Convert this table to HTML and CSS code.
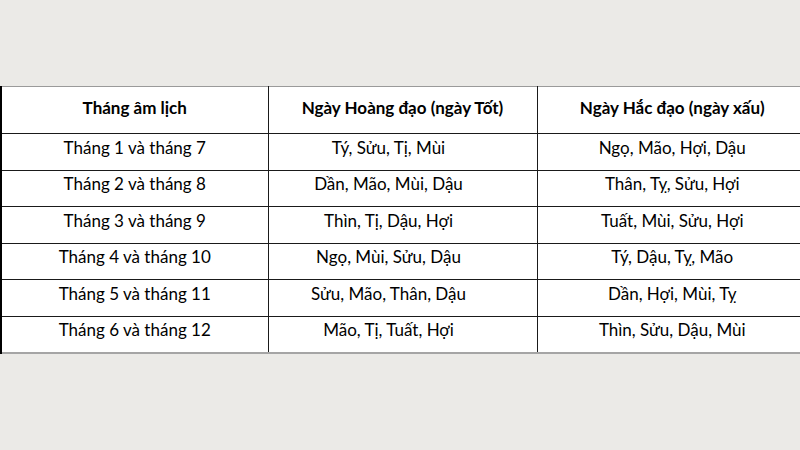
FILE: index.html
```html
<!DOCTYPE html>
<html lang="vi">
<head>
<meta charset="utf-8">
<title>Ngày Hoàng đạo và Hắc đạo</title>
<link rel="stylesheet" href="styles.css">
</head>
<body>
<div class="page">
  <table class="calendar">
    <colgroup>
      <col class="c1"><col class="c2"><col class="c3">
    </colgroup>
    <thead>
      <tr>
        <th>Tháng âm lịch</th>
        <th>Ngày Hoàng đạo (ngày Tốt)</th>
        <th>Ngày Hắc đạo (ngày xấu)</th>
      </tr>
    </thead>
    <tbody>
      <tr><td>Tháng 1 và tháng 7</td><td class="good">Tý, Sửu, Tị, Mùi</td><td>Ngọ, Mão, Hợi, Dậu</td></tr>
      <tr><td>Tháng 2 và tháng 8</td><td class="good">Dần, Mão, Mùi, Dậu</td><td>Thân, Tỵ, Sửu, Hợi</td></tr>
      <tr><td>Tháng 3 và tháng 9</td><td class="good">Thìn, Tị, Dậu, Hợi</td><td>Tuất, Mùi, Sửu, Hợi</td></tr>
      <tr><td>Tháng 4 và tháng 10</td><td class="good">Ngọ, Mùi, Sửu, Dậu</td><td>Tý, Dậu, Tỵ, Mão</td></tr>
      <tr><td>Tháng 5 và tháng 11</td><td class="good">Sửu, Mão, Thân, Dậu</td><td>Dần, Hợi, Mùi, Tỵ</td></tr>
      <tr><td>Tháng 6 và tháng 12</td><td class="good">Mão, Tị, Tuất, Hợi</td><td>Thìn, Sửu, Dậu, Mùi</td></tr>
    </tbody>
  </table>
</div>
</body>
</html>
```
FILE: styles.css
```css
html, body {
  margin: 0;
  padding: 0;
}
body {
  background: #ebeae7;
  width: 800px;
  height: 450px;
  overflow: hidden;
  font-family: Lato, "Open Sans", "Noto Sans", sans-serif;
  color: #000;
}
.page {
  padding-top: 86px;
}
.calendar {
  width: 806px;
  border-collapse: collapse;
  table-layout: fixed;
  background: #fff;
  border-top: 1px solid #9a9a9a;
  border-bottom: 2px solid #a5a5a5;
}
.c1 { width: 267px; }
.c2 { width: 269px; }
.c3 { width: 270px; }
.calendar th,
.calendar td {
  box-sizing: border-box;
  text-align: center;
  line-height: 20px;
  border-left: 1px solid #1a1a1a;
  border-top: 1px solid #1a1a1a;
  font-size: 17px;
}
.calendar th:first-child,
.calendar td:first-child {
  border-left: 2px solid #000;
}
.calendar th {
  height: 47px;
  padding: 0 0 4px;
  font-weight: bold;
  border-top: none;
}
.calendar td {
  height: 36.5px;
  padding: 0 0 8px;
}
.calendar td.good {
  padding-right: 28px;
}
```
